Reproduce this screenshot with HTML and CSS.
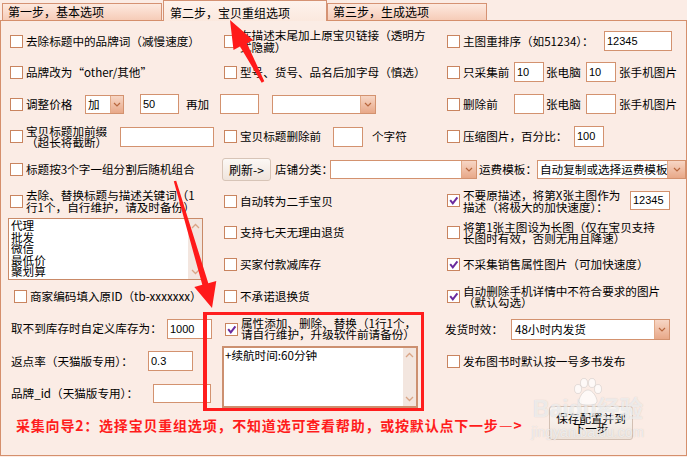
FILE: index.html
```html
<!DOCTYPE html>
<html lang="zh-CN">
<head>
<meta charset="utf-8">
<title>宝贝重组选项</title>
<link rel="stylesheet" href="styles.css">
</head>
<body>
<div class="app">
  <div class="tabs">
    <div class="tab tab1">第一步，基本选项</div>
    <div class="tab tab-active">第二步，宝贝重组选项</div>
    <div class="tab tab3">第三步，生成选项</div>
  </div>
  <div class="panel">
    <div class="row r1">
      <div class="cell"><span class="cb"></span>去除标题中的品牌词（减慢速度）</div>
      <div class="cell"><span class="cb"></span><span class="l12">在描述末尾加上原宝贝链接（透明方<br>式隐藏）</span></div>
      <div class="cell"><span class="cb"></span><span class="lbl w141">主图重排序（如51234）：</span><span class="inp sort-inp">12345</span></div>
    </div>
    <div class="row r2">
      <div class="cell"><span class="cb"></span>品牌改为“other/其他”</div>
      <div class="cell"><span class="cb"></span>型号、货号、品名后加字母（慎选）</div>
      <div class="cell"><span class="cb"></span><span class="lbl w51">只采集前</span><span class="inp n30">10</span><span class="lbl w42 pl2">张电脑</span><span class="inp n30">10</span><span class="pl3">张手机图片</span></div>
    </div>
    <div class="row r3">
      <div class="cell span2"><span class="cb"></span><span class="lbl w59">调整价格</span><div class="sel price-op"><span class="sel-text">加</span><span class="sel-btn"><svg width="8" height="5" viewBox="0 0 8 5"><path d="M1 1l3 3 3-3" fill="none" stroke="#b8683f" stroke-width="1.2"/></svg></span></div><span class="inp price-val">50</span><span class="lbl again">再加</span><span class="inp price-add"></span><div class="sel price-unit"><span class="sel-text"></span><span class="sel-btn"><svg width="8" height="5" viewBox="0 0 8 5"><path d="M1 1l3 3 3-3" fill="none" stroke="#b8683f" stroke-width="1.2"/></svg></span></div></div>
      <div class="cell"><span class="cb"></span><span class="lbl w51">删除前</span><span class="inp n30"></span><span class="lbl w42 pl2">张电脑</span><span class="inp n30"></span><span class="pl3">张手机图片</span></div>
    </div>
    <div class="row r4">
      <div class="cell"><span class="cb"></span><span class="lbl w94 l11">宝贝标题加前缀<br>（超长将截断）</span><span class="inp prefix"></span></div>
      <div class="cell"><span class="cb"></span><span class="lbl w93">宝贝标题删除前</span><span class="inp n30"></span><span class="pl9">个字符</span></div>
      <div class="cell"><span class="cb"></span><span class="lbl w111">压缩图片，百分比：</span><span class="inp n30 h21">100</span></div>
    </div>
    <div class="row r5">
      <div class="cell"><span class="cb"></span>标题按3个字一组分割后随机组合</div>
      <div class="cell span2">
        <span class="btn refresh">刷新-&gt;</span>
        <span class="lbl w59 pl4">店铺分类：</span>
        <div class="sel shop"><span class="sel-text"></span><span class="sel-btn"><svg width="8" height="5" viewBox="0 0 8 5"><path d="M1 1l3 3 3-3" fill="none" stroke="#b8683f" stroke-width="1.2"/></svg></span></div>
        <span class="lbl w60 pl2">运费模板：</span>
        <div class="sel freight"><span class="sel-text">自动复制或选择运费模板</span><span class="sel-btn"><svg width="8" height="5" viewBox="0 0 8 5"><path d="M1 1l3 3 3-3" fill="none" stroke="#b8683f" stroke-width="1.2"/></svg></span></div>
      </div>
    </div>

    <div class="lower">
      <div class="col">
        <div class="cell item-a"><span class="cb"></span><span class="l12">去除、替换标题与描述关键词（1<br>行1个，自行维护，请及时备份）</span></div>
        <div class="ta kw">
          <div class="ta-text">代理<br>批发<br>微信<br>最低价<br>聚划算</div>
          <div class="sb"><svg width="9" height="6" viewBox="0 0 9 6"><path d="M1 5l3.5-3.5L8 5" fill="none" stroke="#d9a586" stroke-width="1.3"/></svg><svg width="9" height="6" viewBox="0 0 9 6"><path d="M1 1l3.5 3.5L8 1" fill="none" stroke="#d9a586" stroke-width="1.3"/></svg></div>
        </div>
        <div class="cell h32 ml4"><span class="cb"></span>商家编码填入原ID（tb-xxxxxxx）</div>
        <div class="cell h33 ml1"><span class="lbl w156">取不到库存时自定义库存为：</span><span class="inp w45">1000</span></div>
        <div class="cell h32 ml1"><span class="lbl w137">返点率（天猫版专用）：</span><span class="inp w45">0.3</span></div>
        <div class="cell h32 ml1"><span class="lbl w142">品牌_id（天猫版专用）：</span><span class="inp w58 h19"></span></div>
      </div>
      <div class="col">
        <div class="cell h32"><span class="cb"></span>自动转为二手宝贝</div>
        <div class="cell h31"><span class="cb"></span>支持七天无理由退货</div>
        <div class="cell h33"><span class="cb"></span>买家付款减库存</div>
        <div class="cell h31"><span class="cb"></span>不承诺退换货</div>
        <div class="redbox">
          <div class="cell attr"><span class="cb"><svg viewBox="0 0 11 11"><path d="M2.2 5.2l2.6 3.2 4.6-6" fill="none" stroke="#6a2b9e" stroke-width="2"/></svg></span><span class="l11">属性添加、删除、替换（1行1个，<br>请自行维护，升级软件前请备份）</span></div>
          <div class="ta attr-ta">
            <div class="ta-text">+续航时间:60分钟</div>
            <div class="sb"><svg width="9" height="6" viewBox="0 0 9 6"><path d="M1 5l3.5-3.5L8 5" fill="none" stroke="#d9a586" stroke-width="1.3"/></svg><svg width="9" height="6" viewBox="0 0 9 6"><path d="M1 1l3.5 3.5L8 1" fill="none" stroke="#d9a586" stroke-width="1.3"/></svg></div>
          </div>
        </div>
      </div>
      <div class="col">
        <div class="cell h31"><span class="cb"><svg viewBox="0 0 11 11"><path d="M2.2 5.2l2.6 3.2 4.6-6" fill="none" stroke="#6a2b9e" stroke-width="2"/></svg></span><span class="lbl l12 w167">不要原描述，将第X张主图作为<br>描述（将极大的加快速度）：</span><span class="inp w40 h19">12345</span></div>
        <div class="cell h33"><span class="cb"></span><span class="l11">将第1张主图设为长图（仅在宝贝支持<br>长图时有效，否则无用且降速）</span></div>
        <div class="cell h31"><span class="cb"><svg viewBox="0 0 11 11"><path d="M2.2 5.2l2.6 3.2 4.6-6" fill="none" stroke="#6a2b9e" stroke-width="2"/></svg></span>不采集销售属性图片（可加快速度）</div>
        <div class="cell h33"><span class="cb"><svg viewBox="0 0 11 11"><path d="M2.2 5.2l2.6 3.2 4.6-6" fill="none" stroke="#6a2b9e" stroke-width="2"/></svg></span><span class="l11">自动删除手机详情中不符合要求的图片<br>（默认勾选）</span></div>
        <div class="cell h32 mln2"><span class="lbl w66">发货时效：</span><div class="sel ship"><span class="sel-text">48小时内发货</span><span class="sel-btn"><svg width="8" height="5" viewBox="0 0 8 5"><path d="M1 1l3 3 3-3" fill="none" stroke="#b8683f" stroke-width="1.2"/></svg></span></div></div>
        <div class="cell h32"><span class="cb"></span>发布图书时默认按一号多书发布</div>
      </div>
    </div>

    <div class="bottom">
      <div class="guide">采集向导2：选择宝贝重组选项，不知道选可查看帮助，或按默认点下一步—&gt;</div>
      <div class="btn save">保存配置并到<br>下一步</div>
    </div>
  </div>

  <div class="wm" aria-hidden="true">
    <svg class="paw" width="36" height="28" viewBox="0 0 36 28">
      <g fill="rgba(255,255,255,0.7)" stroke="rgba(150,150,150,0.3)" stroke-width="0.8">
        <ellipse cx="8" cy="11" rx="3.5" ry="4.5"/>
        <ellipse cx="14" cy="5" rx="3.5" ry="4.5"/>
        <ellipse cx="22" cy="5" rx="3.5" ry="4.5"/>
        <ellipse cx="28" cy="11" rx="3.5" ry="4.5"/>
        <path d="M18 12c-5 0-9 8-9 11s3 4 9 4 9-1 9-4-4-11-9-11z"/>
      </g>
    </svg>
    <div class="wm-big">Baidu经验</div>
    <div class="wm-small">jingyan.baidu.com</div>
  </div>

  <svg class="arrows" width="687" height="457" viewBox="0 0 687 457" aria-hidden="true">
    <polygon fill="#ff1a1a" points="230,20 253,40 247,43.5 264.3,81.3 261.7,82.7 240,46.5 233.5,50"/>
    <polygon fill="#ff1a1a" points="212,308 216.3,281 208.3,283.2 176.2,180.7 173.8,181.3 202.3,284.8 194.3,287"/>
  </svg>
</div>
</body>
</html>
```

FILE: styles.css
```css
* { box-sizing: border-box; margin: 0; padding: 0; }
html, body { width: 687px; height: 457px; overflow: hidden; }
body {
  background: #fbece5;
  font-family: "Noto Sans CJK SC", "Noto Sans", sans-serif;
  font-size: 11.6px;
  line-height: 13px;
  color: #000;
}
.app { position: relative; width: 687px; height: 457px; }

/* tabs */
.tabs { display: flex; align-items: flex-end; height: 20px; padding-left: 2px; }
.tab {
  height: 17px;
  border: 1px solid #d59273;
  border-bottom: 0;
  background: linear-gradient(#fde9df, #f6ccb8);
  font-size: 12px;
  line-height: 16px;
  padding-left: 5px;
  white-space: nowrap;
}
.tab1 { width: 160px; }
.tab3 { width: 160px; }
.tab-active {
  width: 164px;
  height: 21px;
  margin-left: 1px;
  margin-bottom: -1px;
  position: relative;
  z-index: 1;
  background: linear-gradient(#fef2ec, #fbe8de);
  padding: 2px 0 0 6px;
  line-height: 19px;
}

/* panel */
.panel {
  height: 436px;
  border: 1px solid #d58f6c;
  padding-top: 5px;
}
.row {
  display: grid;
  grid-template-columns: 214px 223px 1fr;
  padding-left: 9px;
  align-items: center;
}
.r1 { height: 30px; }
.r2 { height: 32px; }
.r3 { height: 32px; }
.r4 { height: 33px; }
.r5 { height: 32px; }

.cell { display: flex; align-items: center; white-space: nowrap; }
.span2 { grid-column: span 2; }

.cb {
  width: 13px; height: 13px;
  flex: none;
  border: 1px solid #c9845f;
  background: #fff;
  margin-right: 3px;
}
.cb svg { display: block; width: 11px; height: 11px; }

.l10 { line-height: 10px; }
.l11 { line-height: 11px; }
.l12 { line-height: 12px; }
.lbl { flex: none; }
.w40 { width: 40px; }
.w42 { width: 42px; }
.w45 { width: 45px; }
.w51 { width: 51px; }
.w58 { width: 58px; }
.w59 { width: 59px; }
.w60 { width: 60px; }
.w66 { width: 66px; }
.w93 { width: 93px; }
.w94 { width: 94px; }
.w111 { width: 111px; }
.w137 { width: 137px; }
.w141 { width: 141px; }
.w142 { width: 142px; }
.w156 { width: 156px; }
.w167 { width: 167px; }
.pl2 { padding-left: 2px; }
.pl3 { padding-left: 3px; }
.pl4 { padding-left: 4px; }
.pl9 { padding-left: 9px; }

/* inputs */
.inp {
  flex: none;
  height: 20px;
  border: 1px solid #d3926f;
  background: #fff;
  font-family: "Liberation Sans", Arial, sans-serif;
  font-size: 11px;
  line-height: 18px;
  padding-left: 2px;
}
.h19 { height: 19px; line-height: 17px; }
.h21 { height: 21px; line-height: 19px; }
.n30 { width: 30px; }
.sort-inp { width: 68px; }
.prefix { width: 94px; }
.price-val { width: 39px; margin-left: 16px; }
.again { width: 34px; margin-left: 7px; }
.price-add { width: 39px; }

/* selects */
.sel {
  flex: none;
  display: flex;
  height: 19px;
  border: 1px solid #d3926f;
  background: #fff;
}
.sel-text {
  flex: 1;
  overflow: hidden;
  white-space: nowrap;
  padding-left: 2px;
  line-height: 17px;
}
.sel-btn {
  flex: none;
  width: 15px;
  display: flex;
  align-items: center;
  justify-content: center;
  background: linear-gradient(#f7d6c5, #e8a888);
  border-left: 1px solid #e2a987;
}
.price-op { width: 39px; }
.price-op .sel-btn { width: 13px; }
.price-unit { width: 104px; margin-left: 13px; }
.shop { width: 147px; }
.freight { width: 149px; }
.freight .sel-btn { width: 18px; }
.ship { width: 159px; height: 21px; }
.ship .sel-text { line-height: 19px; padding-left: 3px; }

/* buttons */
.btn {
  flex: none;
  display: flex;
  align-items: center;
  justify-content: center;
  text-align: center;
  border: 1px solid #d7c4b7;
  border-radius: 3px;
  background: linear-gradient(#fcf8f5, #efe4dc);
}
.refresh { width: 49px; height: 23px; margin-left: -2px; font-size: 12px; }

/* lower section */
.lower {
  display: grid;
  grid-template-columns: 214px 223px 1fr;
  padding-left: 9px;
  align-items: start;
}
.col { display: flex; flex-direction: column; }
.h31 { height: 31px; }
.h32 { height: 32px; }
.h33 { height: 33px; }
.ml1 { margin-left: 1px; }
.ml4 { margin-left: 4px; }
.mln2 { margin-left: -2px; }
.item-a { margin-top: 4px; height: 24px; }

.ta { display: flex; background: #fff; }
.ta-text { flex: 1; white-space: nowrap; padding-left: 1px; }
.sb {
  flex: none;
  width: 14px;
  background: #f3e6df;
  display: flex;
  flex-direction: column;
  justify-content: space-between;
  align-items: center;
  padding: 4px 0 4px;
}
.kw {
  width: 195px;
  height: 62px;
  margin: 5px 0 0 -2px;
  border: 1px solid #c98a68;
}
.kw .ta-text { line-height: 11.5px; padding: 1px 0 0 2px; }

.redbox {
  width: 221px;
  height: 99px;
  margin-left: -21px;
  border: 3px solid #ff1d1d;
  border-left-width: 4px;
  padding-top: 3px;
}
.attr { margin-left: 18px; }
.attr-ta {
  width: 196px;
  height: 62px;
  margin: 6px 0 0 15px;
  border: 2px solid #cc9070;
}
.attr-ta .ta-text { line-height: 14px; padding-left: 1px; }
.attr-ta .sb { width: 13px; }

/* bottom */
.bottom {
  display: grid;
  grid-template-columns: 548px 84px;
  height: 29px;
}
.guide {
  padding-left: 15px;
  line-height: 29px;
  color: #ff1c1c;
  font-weight: bold;
  font-size: 14px;
  letter-spacing: 0.8px;
  white-space: nowrap;
}
.save {
  height: 34px;
  margin-top: -5px;
  line-height: 10px;
  border-color: #d3c0b3;
}

/* watermark */
.wm {
  position: absolute;
  left: 527px;
  top: 378px;
  width: 122px;
  text-align: center;
  color: rgba(255, 255, 255, 0.65);
  pointer-events: none;
  z-index: 3;
}
.paw { position: absolute; left: 43px; top: 0; }
.wm-big {
  margin-top: 20px;
  font-family: "Liberation Sans", Arial, sans-serif;
  font-weight: bold;
  font-size: 23px;
  line-height: 22px;
  text-shadow: 0 0 1px rgba(140, 140, 140, 0.4);
}
.wm-small {
  margin-top: 4px;
  font-family: "Liberation Sans", Arial, sans-serif;
  font-size: 14px;
  line-height: 16px;
  text-shadow: 0 0 1px rgba(140, 140, 140, 0.4);
}

.arrows { position: absolute; left: 0; top: 0; z-index: 4; pointer-events: none; }
```
